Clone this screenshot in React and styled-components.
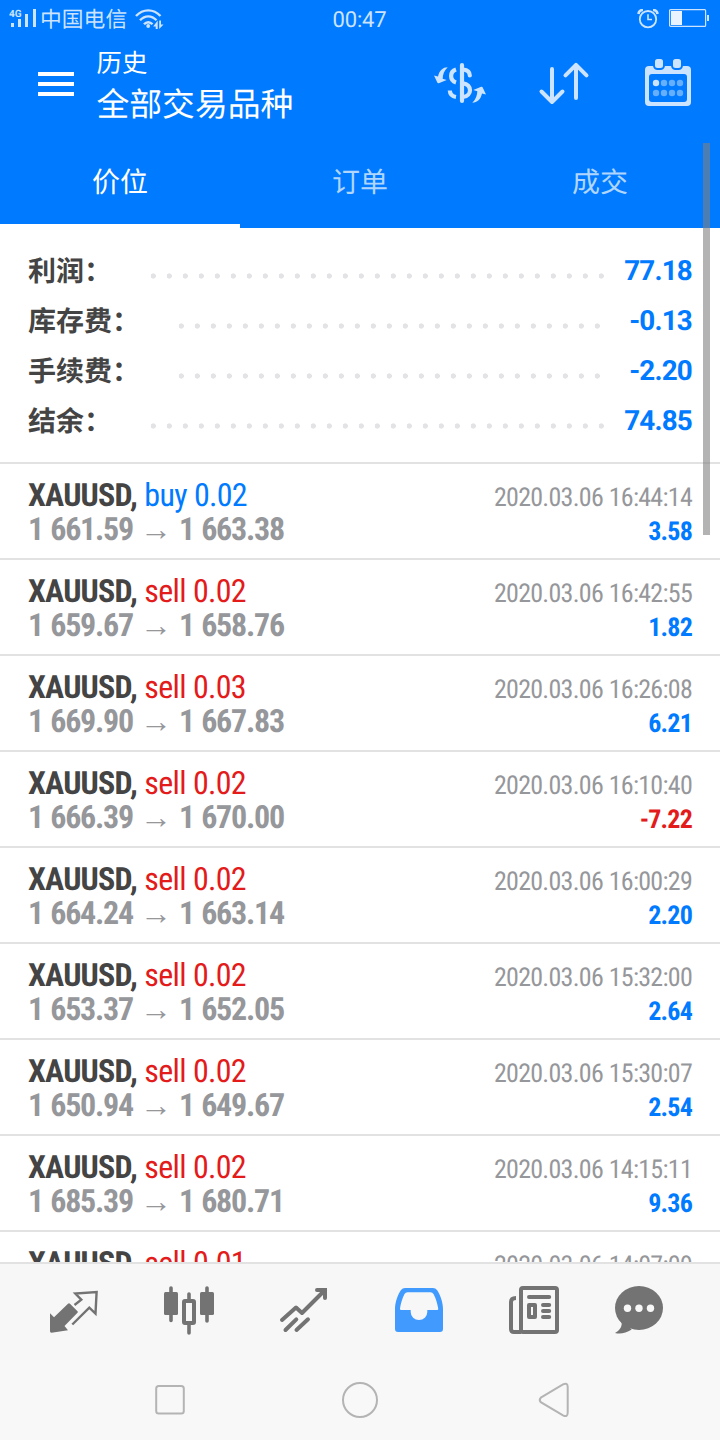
import React from "react";
import styled, { createGlobalStyle } from "styled-components";

const BLUE = "#007aff";
const RED = "#e31b1b";
const PALE = "#cce4ff";

const GlobalStyle = createGlobalStyle`
  * { box-sizing: border-box; }
  body {
    margin: 0;
    background: #fff;
    font-family: Roboto, "Noto Sans CJK SC", sans-serif;
    text-rendering: geometricPrecision;
  }
  svg { display: block; flex: none; }
`;

const Screen = styled.div`
  position: relative;
  width: 720px;
  height: 1440px;
  display: flex;
  flex-direction: column;
  overflow: hidden;
`;

const Header = styled.header`
  flex: none;
  background: ${BLUE};
  color: #fff;
`;

const StatusBar = styled.div`
  height: 40px;
  display: grid;
  grid-template-columns: 1fr auto 1fr;
  align-items: center;
  padding: 0 10px 0 8px;
  color: ${PALE};
`;

const StatusGroup = styled.div`
  display: flex;
  align-items: center;
  justify-content: ${(p) => (p.$end ? "flex-end" : "flex-start")};
  gap: ${(p) => (p.$end ? "10px" : "0")};
`;

const Carrier = styled.span`
  font-size: 21.8px;
  line-height: 36px;
  padding-top: 2px;
  margin-right: 8px;
`;

const Clock = styled.span`
  font-size: 22px;
  line-height: 36px;
  padding: 2px 0 0 1px;
  letter-spacing: -0.2px;
`;

const AppBar = styled.div`
  height: 96px;
  display: flex;
  padding: 0 22px 0 38px;
`;

const MenuButton = styled.div`
  width: 58.5px;
  padding-top: 32px;
  display: flex;
  flex-direction: column;
  gap: 6px;
`;

const MenuLine = styled.span`
  width: 36px;
  height: 4px;
  background: #fff;
`;

const Titles = styled.div`
  flex: 1;
  padding-top: 6px;
`;

const Caption = styled.div`
  font-size: 25.4px;
  line-height: 36px;
`;

const Title = styled.div`
  font-size: 32.8px;
  line-height: 48px;
`;

const Actions = styled.div`
  display: flex;
  gap: 44px;
  padding-top: 14px;
`;

const Tabs = styled.nav`
  display: grid;
  grid-template-columns: repeat(3, 1fr);
  height: 92px;
`;

const Tab = styled.div`
  height: 92px;
  font-size: 28px;
  line-height: 94px;
  text-align: center;
  color: ${(p) => (p.$active ? "#fff" : "#b0d6ff")};
  border-bottom: 4px solid ${(p) => (p.$active ? "#fff" : BLUE)};
`;

const Summary = styled.section`
  flex: none;
  height: 236px;
  padding: 17px 28px 0;
  border-bottom: 2px solid #e2e2e3;
`;

const SummaryRow = styled.div`
  display: flex;
  align-items: center;
  height: 50px;
`;

const SummaryLabel = styled.span`
  font-size: 28px;
  font-weight: 700;
  line-height: 46px;
  padding-top: 4px;
  color: #444;
`;

const Dots = styled.span`
  flex: 1;
  height: 6px;
  margin: 11px 20px 0 38px;
  background: radial-gradient(circle at 3.3px 3px, #e3e3e5 2.3px, transparent 2.9px) 0 0 / 16px 6px repeat-x;
`;

const SummaryValue = styled.span`
  font-size: 27.8px;
  font-weight: 700;
  letter-spacing: -0.8px;
  color: ${BLUE};
`;

const Deals = styled.main`
  flex: 1;
  min-height: 0;
  overflow: hidden;
`;

const Deal = styled.article`
  height: 96px;
  padding: 14px 28px 0;
  border-bottom: 2px solid #e2e2e3;
  font-stretch: 75%;
`;

const DealLine = styled.div`
  display: flex;
  justify-content: space-between;
  align-items: baseline;
  height: 34px;
  line-height: 34px;
  font-size: 32px;
  white-space: pre;
`;

const Symbol = styled.span`
  font-weight: 700;
  letter-spacing: -0.8px;
  color: #444;
`;

const Side = styled.span`
  letter-spacing: -0.7px;
  word-spacing: 0.5px;
  color: ${(p) => (p.$buy ? BLUE : RED)};
`;

const Prices = styled.span`
  font-weight: 700;
  letter-spacing: -1.25px;
  word-spacing: 1.2px;
  color: #96979b;
`;

const Arrow = styled.span`
  font-family: "Liberation Sans", sans-serif;
  font-stretch: normal;
  letter-spacing: 0;
  margin: 0 7px;
`;

const Time = styled.span`
  font-size: 26px;
  letter-spacing: -0.73px;
  word-spacing: 0.4px;
  color: #96979b;
`;

const Profit = styled.span`
  font-size: 26px;
  font-weight: 700;
  letter-spacing: -0.8px;
  color: ${(p) => (p.$loss ? RED : BLUE)};
`;

const TabBar = styled.footer`
  flex: none;
  height: 98px;
  display: grid;
  grid-template-columns: repeat(4, 115px) 105px 60px;
  padding: 16px 0 0 44px;
  background: #f7f7f7;
  border-top: 2px solid #e2e2e3;
`;

const NavBar = styled.div`
  flex: none;
  height: 80px;
  display: flex;
  align-items: center;
  justify-content: space-between;
  padding: 0 150px;
  background: #f8f8f8;
`;

const ScrollThumb = styled.div`
  position: absolute;
  top: 143px;
  right: 10.5px;
  width: 7px;
  height: 392px;
  background: rgba(128, 128, 128, 0.6);
`;

const Icon = ({ size = 60, children, ...rest }) => (
  <svg width={size} height={size} viewBox={`0 0 ${size} ${size}`} fill="none" {...rest}>
    {children}
  </svg>
);

const SignalIcon = () => (
  <svg width="32" height="22" viewBox="0 0 32 22" fill={PALE}>
    <text x="1" y="7.500" fontSize="10" fontWeight="700" fontFamily="Roboto, sans-serif">4G</text>
    <rect x="3" y="14" width="3" height="4" />
    <rect x="10" y="10" width="3" height="8" />
    <rect x="17" y="5" width="3" height="13" />
    <rect x="25" y="0" width="3" height="18" />
  </svg>
);

const WifiIcon = () => (
  <svg width="30" height="22" viewBox="0 0 30 22" fill="none" stroke={PALE} strokeWidth="2.4">
    <path d="M1 7C8 -0.500 18.500 -0.500 25.500 7" />
    <path d="M5 11.300C10 6 16.500 6 21.500 11.300" />
    <path d="M9 15.300C11.500 12.500 15 12.500 17.500 15.300" />
    <circle cx="13.200" cy="17" r="1.900" fill={PALE} stroke="none" />
    <path d="M22.700 11.500V20H20.700V17.500H18.200ZM24.200 11.500V20L28.500 15.500H26V11.500Z" fill={PALE} stroke="none" />
  </svg>
);

const AlarmIcon = () => (
  <svg width="22" height="22" viewBox="0 0 22 22" fill="none" stroke={PALE}>
    <circle cx="11" cy="10.200" r="8.200" strokeWidth="1.800" />
    <path d="M11 5.300V10.500H15" strokeWidth="1.600" />
    <path d="M1.500 5Q2 1 6 1M20.500 5Q20 1 16 1" strokeWidth="2.600" />
  </svg>
);

const BatteryIcon = () => (
  <svg width="41" height="22" viewBox="0 0 41 22">
    <rect x="0.600" y="0.600" width="36" height="16.800" rx="1" fill="none" stroke={PALE} strokeWidth="1.200" />
    <rect x="2" y="2" width="11" height="14" fill="#e8f3ff" />
    <rect x="38" y="6" width="2" height="6" fill={PALE} />
  </svg>
);

const CURVED_ARROW =
  "M17.700 13.300C12.700 13.300 9.300 16.700 8 22.500L4 21.500L7.300 28.600Q7.700 29.600 8.800 29.300L16.700 26L12.700 24.700C12.700 21 14 16.700 17.700 13.300Z";

const CurrencyIcon = () => (
  <Icon stroke={PALE} strokeWidth="4.200">
    <path d="M32 11V47" strokeLinecap="round" />
    <path d="M33 15.500C37.500 16 39.800 18 39.800 21.500" strokeLinecap="round" />
    <path d="M33 29.300C42.300 30.300 42.300 42 33 43" />
    <path d="M26 15.500C19.500 17.500 19.500 26.500 26 28.500" />
    <path d="M19.800 36.500C20 40.300 22.500 42.500 26 43" />
    <path d={CURVED_ARROW} fill={PALE} stroke="none" />
    <path d={CURVED_ARROW} fill={PALE} stroke="none" transform="rotate(180 30 31)" />
  </Icon>
);

const SortIcon = () => (
  <Icon stroke={PALE} strokeWidth="4" strokeLinecap="round" strokeLinejoin="round">
    <path d="M18 15V48M7.500 37.500L18 48L28.500 37.500" />
    <path d="M42 44V11M31.500 21.300L42 10.800L52.500 21.300" />
  </Icon>
);

const CalendarIcon = () => (
  <Icon>
    <rect x="7" y="12" width="46" height="40" rx="4" fill={PALE} />
    <rect x="11" y="20" width="38" height="28" rx="3" fill={BLUE} />
    {[17, 35].map((x) => (
      <rect key={x} x={x - 1} y="4" width="10" height="11" rx="3.500" fill={PALE} stroke={BLUE} strokeWidth="2" />
    ))}
    {[29, 39].map((y) =>
      [18, 26, 34, 42].map((x) => (
        <circle key={`${x}-${y}`} cx={x} cy={y} r="3.200" fill={x === 18 && y === 29 ? PALE : "#66afff"} />
      ))
    )}
  </Icon>
);

const GREY = "#737373";

const QuotesIcon = () => (
  <Icon>
    <path d="M6 33.300L10 37.300L24 23.700Q25 22.700 26 23.700L33.500 31.200Q34.300 32 33.500 32.800L20.500 46L24 50.300L7.500 52.700Q6 52.800 6 51.300Z" fill={GREY} />
    <path d="M30.500 25L37.300 19.700L31.300 13.500L52.600 12L51.500 33.500L45.300 27.600L28.300 44.500" stroke={GREY} strokeWidth="2.400" />
  </Icon>
);

const ChartIcon = () => (
  <Icon stroke={GREY} strokeWidth="3.600" strokeLinecap="round">
    <path d="M12 8V40.500M48 8V41M30 14V20M30 44V53" />
    <rect x="5" y="12" width="14" height="23" rx="1.500" fill={GREY} stroke="none" />
    <rect x="41" y="12" width="14" height="23" rx="1.500" fill={GREY} stroke="none" />
    <rect x="25" y="21" width="10" height="22" rx="1" strokeWidth="4" />
  </Icon>
);

const TradeIcon = () => (
  <Icon stroke={GREY} strokeWidth="4" strokeLinecap="round">
    <path d="M8 40L22 27.500L28 33L51 10" strokeLinejoin="round" />
    <path d="M43 10H51V18" />
    <path d="M11.500 50L22.300 39.300M22.500 50L34 39.300" />
  </Icon>
);

const HistoryIcon = () => (
  <Icon>
    <path
      fillRule="evenodd"
      fill="#419bff"
      d="M6 29C6 22 9 14 12 10Q13.500 8 16 8H44Q46.500 8 48 10C51 14 54 22 54 29V49Q54 52 51 52H9Q6 52 6 49ZM12.300 30H21.700V32A8.300 8 0 0 0 38.300 32V30H48Q49.600 30 49.200 28.500C48.500 24 46.700 18 44.500 14Q43.500 12.200 41.500 12.200H18.500Q16.500 12.200 15.500 14C13.500 18 11.500 24 11 28.500Q10.800 30 12.300 30Z"
    />
  </Icon>
);

const NewsIcon = () => (
  <Icon stroke={GREY} strokeWidth="4" strokeLinecap="round" strokeLinejoin="round">
    <rect x="17" y="8" width="36" height="44" rx="2" />
    <path d="M12 18Q7 18 7 22V49Q7 52 10 52H17" strokeLinecap="butt" />
    <path d="M25 17H45.200M39 25H45.200M39 31H45.200M39 37H45.200" />
    <rect x="25" y="25" width="6" height="12" />
  </Icon>
);

const ChatIcon = () => (
  <Icon fill={GREY}>
    <ellipse cx="30" cy="28" rx="24" ry="22" />
    <path d="M8 36L12.700 43C13 48 9 51.500 6 53Q14 55 22.700 49.500Z" />
    {[18.5, 30, 41.5].map((x) => (
      <circle key={x} cx={x} cy="28.300" r="3.700" fill="#f7f7f7" />
    ))}
  </Icon>
);

const summary = [
  ["利润：", "77.18"],
  ["库存费：", "-0.13"],
  ["手续费：", "-2.20"],
  ["结余：", "74.85"],
];

const deals = [
  ["buy 0.02", "1 661.59", "1 663.38", "16:44:14", "3.58"],
  ["sell 0.02", "1 659.67", "1 658.76", "16:42:55", "1.82"],
  ["sell 0.03", "1 669.90", "1 667.83", "16:26:08", "6.21"],
  ["sell 0.02", "1 666.39", "1 670.00", "16:10:40", "-7.22"],
  ["sell 0.02", "1 664.24", "1 663.14", "16:00:29", "2.20"],
  ["sell 0.02", "1 653.37", "1 652.05", "15:32:00", "2.64"],
  ["sell 0.02", "1 650.94", "1 649.67", "15:30:07", "2.54"],
  ["sell 0.02", "1 685.39", "1 680.71", "14:15:11", "9.36"],
  ["sell 0.01", "", "", "14:07:09", ""],
];

const DealRow = ({ deal: [side, open, close, time, profit] }) => (
  <Deal>
    <DealLine>
      <span>
        <Symbol>XAUUSD,</Symbol> <Side $buy={side.startsWith("buy")}>{side}</Side>
      </span>
      <Time>2020.03.06 {time}</Time>
    </DealLine>
    {open && (
      <DealLine>
        <Prices>
          {open}
          <Arrow>→</Arrow>
          {close}
        </Prices>
        <Profit $loss={profit.startsWith("-")}>{profit}</Profit>
      </DealLine>
    )}
  </Deal>
);

export default function App() {
  return (
    <Screen>
      <GlobalStyle />
      <Header>
        <StatusBar>
          <StatusGroup>
            <SignalIcon />
            <Carrier>中国电信</Carrier>
            <WifiIcon />
          </StatusGroup>
          <Clock>00:47</Clock>
          <StatusGroup $end>
            <AlarmIcon />
            <BatteryIcon />
          </StatusGroup>
        </StatusBar>
        <AppBar>
          <MenuButton>
            <MenuLine />
            <MenuLine />
            <MenuLine />
          </MenuButton>
          <Titles>
            <Caption>历史</Caption>
            <Title>全部交易品种</Title>
          </Titles>
          <Actions>
            <CurrencyIcon />
            <SortIcon />
            <CalendarIcon />
          </Actions>
        </AppBar>
        <Tabs>
          <Tab $active>价位</Tab>
          <Tab>订单</Tab>
          <Tab>成交</Tab>
        </Tabs>
      </Header>
      <Summary>
        {summary.map(([label, value]) => (
          <SummaryRow key={label}>
            <SummaryLabel>{label}</SummaryLabel>
            <Dots />
            <SummaryValue>{value}</SummaryValue>
          </SummaryRow>
        ))}
      </Summary>
      <Deals>
        {deals.map((deal) => (
          <DealRow key={deal[3]} deal={deal} />
        ))}
      </Deals>
      <TabBar>
        <QuotesIcon />
        <ChartIcon />
        <TradeIcon />
        <HistoryIcon />
        <NewsIcon />
        <ChatIcon />
      </TabBar>
      <NavBar>
        <Icon size={40} stroke="#b4b4b4" strokeWidth="2">
          <rect x="6.200" y="6" width="27.600" height="27.600" rx="2.500" />
        </Icon>
        <Icon size={40} stroke="#b4b4b4" strokeWidth="2">
          <circle cx="20" cy="20" r="17" />
        </Icon>
        <Icon size={40} stroke="#b4b4b4" strokeWidth="2">
          <path d="M10.800 17.600L33 4.300Q37.700 2.300 37.700 7V32.500Q37.700 37.700 33 35.300L10.800 22.200Q8.700 20 10.800 17.600Z" />
        </Icon>
      </NavBar>
      <ScrollThumb />
    </Screen>
  );
}
